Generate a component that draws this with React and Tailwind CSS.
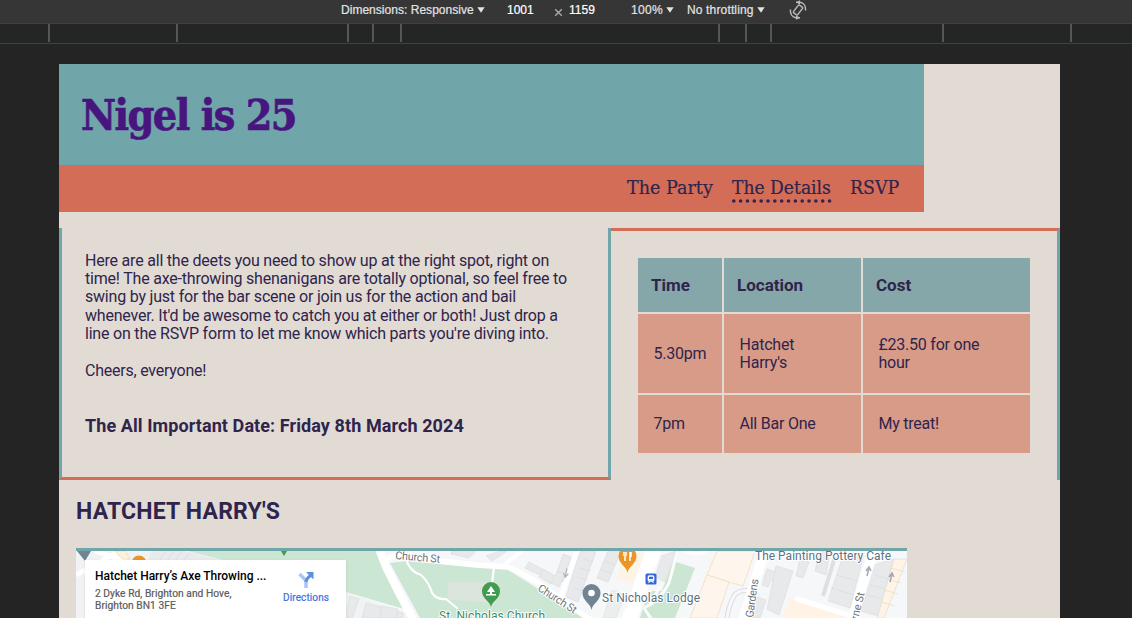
import React from "react";

function Caret() {
  return (
    <svg width="8" height="6" viewBox="0 0 8 6" className="shrink-0">
      <path d="M0.3 0.3h7.4L4 5.8z" fill="#e3e3e3" />
    </svg>
  );
}

function T({ w, className, children }) {
  return (
    <span className="block shrink-0 whitespace-nowrap" style={{ width: w }}>
      <span className={className}>{children}</span>
    </span>
  );
}

function Toolbar() {
  return (
    <div className="flex h-[23px] bg-[#363636] pl-[341px] font-['Liberation_Sans',Arial,sans-serif] text-[12px] leading-[21px] text-[#e3e3e3] [-webkit-text-stroke:0.2px]">
      <T w={136} className="tracking-[0.03px]">Dimensions: Responsive</T>
      <span className="mt-[7px] w-[30px] leading-none"><Caret /></span>
      <T w={47} className="text-white">1001</T>
      <svg width="9" height="9" viewBox="0 0 9 9" className="mr-[6px] mt-[8px] shrink-0"><path d="M1.2 1.2l6.6 6.6M7.8 1.2L1.2 7.8" stroke="#aaa" strokeWidth="1.4" /></svg>
      <T w={62} className="text-white">1159</T>
      <T w={35} className="tracking-[0.3px]">100%</T>
      <span className="mt-[7px] w-[21px] leading-none"><Caret /></span>
      <T w={70} className="tracking-[0.15px]">No throttling</T>
      <span className="mt-[7px] w-[31px] leading-none"><Caret /></span>
      <svg width="20" height="20" viewBox="0 0 20 20" fill="none" stroke="#b9b9b9" strokeWidth="1.5" className="shrink-0">
        <rect x="7.400" y="5.200" width="5.200" height="9.600" rx="1" transform="rotate(38 10 10)" />
        <path d="M8 2.300L12 2.300C15.500 2.800 18 6 17.600 10.500M12 17.800L8 17.800C4.500 17.200 2 14 2.400 9.500" />
        <path d="M12 .3v4.500L8 2.300zM8 19.800v-4.500l4 2.500z" fill="#b9b9b9" stroke="none" />
      </svg>
    </div>
  );
}

const ticks = [48, 176, 347, 372, 400, 718, 745, 770, 942, 1070];

function Map() {
  return (
    <svg width="831" height="67" viewBox="76 551 831 67" className="block">
      <rect x="76" y="551" width="831" height="67" fill="#f6f7f9" />
      <path d="M76 551H180L346 592 420 618H76z" fill="#f1f2f4" />
      <path d="M76 575L120 551M95 551L130 563" stroke="#fff" strokeWidth="5" />
      <path d="M115 551h10l5 8h-7z" fill="#fdf1df" stroke="#f2c68b" strokeWidth=".5" />
      <path d="M151 551h34l80 20h-120z" fill="#e9eaeb" />
      <path d="M158 562l8-11M166 562l8-11M174 562l8-11M182 562l8-9" stroke="#d9dadd" strokeWidth=".7" />
      <path d="M188 551H377L404 609 346 592z" fill="#cbe6d3" />
      <g fill="#e8e9eb" stroke="#d9dadd" strokeWidth=".6">
        <path d="M350 596l9 3-7 19h-7z" /><path d="M366 603l37 10v5H362z" /><path d="M382 606l16 3-2 9h-16z" />
        <path d="M452 551h24l-7 7-18-4z" /><path d="M486 556l14-5h7l-15 10z" />
        <path d="M529 562l17 9-4 5-17-8z" /><path d="M543 569l14 8-6 7-12-7z" />
        <path d="M556 575l7-21 8 3-8 25z" /><path d="M551 583l7-12 7 3-6 13z" />
        <path d="M580 551h16l-18 51-12-5z" /><path d="M583 559l10 3M580 568l10 3M577 577l10 3M573 588l10 3" fill="none" />
        <path d="M608 551h13l-13 31-11-4z" /><path d="M604 561l11 4M601 570l11 3" fill="none" />
        <path d="M662 556l14-5-11 31-10-5z" />
      </g>
      <path d="M390 563L407 561 479 568 507 569 582 617V618H420z" fill="#cbe6d3" />
      <path d="M448 582l40 0 4 21-44-4z" fill="#dce5dc" />
      <path d="M576 613h6v5h-8z" fill="#cbe6d3" />
      <g fill="none" stroke="#fff" strokeLinecap="round" strokeLinejoin="round">
        <path d="M379 549L386 567Q399 594 414 621" strokeWidth="8" />
        <path d="M386 560Q394 554 405 555L440 561 478 565 507 567Q523 572 548 590L592 621" strokeWidth="5.500" />
        <path d="M503 566L523 550" strokeWidth="4" />
        <path d="M578 549L559 602" strokeWidth="5" />
        <path d="M407 562Q411 572 421 575 429 582 432 593 437 600 446 599L457 608" strokeWidth="2.200" />
        <path d="M494 567L492 584" strokeWidth="2.200" />
        <path d="M654 549L629 620" strokeWidth="15" />
      </g>
      <path d="M566 569v8m-2.500-3l2.500 4 2.500-4" stroke="#aeb3c1" strokeWidth="1.200" fill="none" transform="rotate(10 570 573)" />
      <path d="M620 567l16-14h8l-12 31-15-7z" fill="#fef3e4" />
      <path d="M612 590l13 5-9 23h-13z" fill="#eceded" stroke="#dddddf" strokeWidth=".6" />
      <path d="M673 561L695 568 675 618H640Q644 602 652 591L662 591z" fill="#cbe6d3" />
      <path d="M678 549L669 583Q661 600 644 608M644 608L652 620M651 604L660 586" fill="none" stroke="#fafbfb" strokeWidth="3" />
      <path d="M680 549q18 9 29 0" fill="none" stroke="#fff" strokeWidth="3" />
      <path d="M717 551H755L743 586 729 582 707 575z" fill="#fef6ec" stroke="#f1ddbd" strokeWidth=".8" />
      <path d="M707 575L729 582 717 618H690z" fill="#fef6ec" stroke="#f1ddbd" strokeWidth=".8" />
      <path d="M751 591q-12-2-17 5-6 11-7 23" fill="none" stroke="#dadde2" strokeWidth="5" />
      <path d="M751 591q-12-2-17 5-6 11-7 23" fill="none" stroke="#f7f8fa" strokeWidth="3" />
      <path d="M765 549L743 620" stroke="#fff" strokeWidth="10" />
      <g fill="#e8e9eb" stroke="#d9dadd" strokeWidth=".6">
        <path d="M767 569l12 4-3 8-5-1-3 7-6-2z" /><path d="M776 566l17 5-14 44-12-6z" /><path d="M757 597l9 3-6 18h-9z" />
        <path d="M800 559l9 3-6 16-7-2z" /><path d="M820 551h10l-4 24-11-4z" />
        <path d="M842 559l22-5-14 54-22-7z" /><path d="M836 575l22 6M831 588l23 7" fill="none" />
        <path d="M874 565l20-6-16 57-17-5z" /><path d="M874 575l15 4M870 585l16 4M868 595l16 4" fill="none" />
        <path d="M894 559h13l-23 59h-7z" fill="#fef3e4" />
        <path d="M891 568l14 4M887 579l14 4M884 590l14 4M881 602l14 4" stroke="#f0d7af" fill="none" />
      </g>
      <path d="M835 557L823 596" stroke="#dcdfe4" strokeWidth="4" />
      <path d="M789 598l68 23h-75z" fill="#fef3e4" />
      <path d="M797 599L855 617" stroke="#fff" strokeWidth="5" strokeLinecap="round" />
      <path d="M874 549L852 621" stroke="#fff" strokeWidth="10" />
      <path d="M867 576l2-8m-3 3l3-4 2 4M890 582l2-8m-3 3l3-4 2 4" stroke="#a3a8b8" strokeWidth="1.500" fill="none" />
      <path d="M77 551h14l-6 10z" fill="#718493" />
      <circle cx="139" cy="563" r="7.500" fill="#eb9527" />
      <path d="M281 551h6l-3 5z" fill="#429c50" />
      <path d="M491 607c-1-6-9-8-9-16a9 9 0 0 1 18 0c0 8-8 10-9 16z" fill="#429c50" />
      <path d="M491 586l-4 6h3v2h-4v1.500h10V594h-4v-2h3z" fill="#fff" />
      <path d="M591.500 610c-1-7-9-9-9-17a9 9 0 0 1 18 0c0 8-8 10-9 17z" fill="#718493" />
      <circle cx="591.500" cy="593" r="3.300" fill="#fff" />
      <path d="M627.500 573c-1-7-9-9-9-17a9 9 0 0 1 18 0c0 8-8 10-9 17z" fill="#eb9527" />
      <path d="M624 552v4m2-4v4m-1 0v5m5-9v9m1-9v5" stroke="#fff" strokeWidth="1.500" />
      <rect x="645.500" y="573.500" width="11" height="11" rx="1.500" fill="#3466dc" />
      <rect x="648.300" y="576" width="5.400" height="5" rx="1" fill="none" stroke="#fff" strokeWidth="1.300" />
      <path d="M648.500 583l1.500-2m3.500 2l-1.500-2M648 579.500h6" stroke="#fff" />
      <g fontFamily="Roboto, sans-serif" fontWeight="400" stroke="#fff" strokeWidth="2" paintOrder="stroke" strokeLinejoin="round">
        <text x="395" y="559" fontSize="11" fill="#6b7480" textLength="45" transform="rotate(5 395 559)">Church St</text>
        <text x="537" y="590" fontSize="11" fill="#6b7480" textLength="44" transform="rotate(33 537 590)">Church St</text>
        <text x="439" y="620" fontSize="12" fill="#418b56" textLength="106">St. Nicholas Church</text>
        <text x="602" y="602" fontSize="12" fill="#5b7180" textLength="98">St Nicholas Lodge</text>
        <text x="755" y="560" fontSize="12" fill="#5b7180" textLength="136">The Painting Pottery Cafe</text>
        <text x="753" y="618" fontSize="11" fill="#6b7480" textLength="39" transform="rotate(-82 753 618)">Gardens</text>
        <text x="855" y="632" fontSize="11" fill="#6b7480" textLength="40" transform="rotate(-76 855 632)">borne St</text>
      </g>
    </svg>
  );
}

function MapCard() {
  return (
    <div className="absolute left-[9px] top-[9px] flex h-[90px] w-[261px] bg-white pl-[10px] pt-[8px] shadow-sm">
      <div className="w-[188px] whitespace-nowrap">
        <div className="text-[12px] font-medium leading-[16px] tracking-[-0.02px] text-black">Hatchet Harry’s Axe Throwing ...</div>
        <div className="mt-[4px] text-[10.200px] leading-[12px] tracking-[0.06px] text-[#5b5b5b] [-webkit-text-stroke:0.200px]">2 Dyke Rd, Brighton and Hove,<br />Brighton BN1 3FE</div>
      </div>
      <div className="flex flex-col items-center">
        <svg width="16" height="18" viewBox="0 0 16 18" className="mt-[3px]">
          <path d="M1.500 3L8 9.500V17" fill="none" stroke="#a9c5f4" strokeWidth="3.500" />
          <path d="M8 11q0-3 5-7" fill="none" stroke="#5b8fe0" strokeWidth="3" />
          <path d="M8 1h7.500v7.500z" fill="#5b8fe0" />
        </svg>
        <div className="mt-[3px] text-[10px] leading-[12px] tracking-[0.12px] text-[#3b6fe0] [-webkit-text-stroke:0.200px]">Directions</div>
      </div>
    </div>
  );
}

function Title() {
  return (
    <header className="flex h-[101px] w-[865px] bg-[#70a6a9] pl-[22px] pt-[23px]">
      <h1 className="origin-left scale-x-[0.990] whitespace-nowrap font-['Roboto_Slab','DejaVu_Serif',serif] text-[43px] font-bold leading-[57px] tracking-[-1.500px] text-[#48157f] [-webkit-text-stroke:0.700px_#48157f] [font-stretch:condensed]">Nigel is 25</h1>
    </header>
  );
}

function Nav() {
  const link = "block origin-left whitespace-nowrap [-webkit-text-stroke:0.200px]";
  return (
    <nav className="flex h-[47px] w-[865px] bg-[#d36d57] pl-[568px] pt-[11px] font-['Roboto_Slab','DejaVu_Serif',serif] text-[18px] leading-[23px] text-[#2f244c]">
      <div className="w-[105px]"><span className={`${link} scale-x-[0.975]`}>The Party</span></div>
      <div className="w-[117.500px]">
        <span className={`${link} scale-x-[0.953]`}>The Details</span>
        <svg width="100" height="4" viewBox="0 0 100 4" className="mt-[0.300px] block">
          <path d="M1.800 2h96.200" stroke="#2f244c" strokeWidth="3.600" strokeLinecap="round" strokeDasharray="0 6.840" />
        </svg>
      </div>
      <div><span className={`${link} scale-x-[0.965]`}>RSVP</span></div>
    </nav>
  );
}

function Schedule() {
  const th = "flex items-center bg-[#86a7a9] pl-[13px] text-[17px] font-bold";
  const td = "flex items-center bg-[#d89b88] pl-[15.500px] tracking-[-0.230px]";
  return (
    <div className="grid w-[392px] grid-cols-[84px_137px_167px] grid-rows-[54px_79px_58px] gap-[2px] text-[16px] leading-[18px]">
      <div className={th}>Time</div><div className={th}>Location</div><div className={th}>Cost</div>
      <div className={td}>5.30pm</div><div className={td}>Hatchet<br />Harry's</div><div className={td}>£23.50 for one<br />hour</div>
      <div className={td}>7pm</div><div className={td}>All Bar One</div><div className={td}>My treat!</div>
    </div>
  );
}

export default function App() {
  return (
    <div className="h-[618px] w-[1132px] overflow-hidden bg-[#242424]">
      <Toolbar />
      <div className="h-[21px] border-y border-[#3e403f] bg-[#242625]">
        <svg width="1132" height="18" className="block">
          {ticks.map((x) => <rect key={x} x={x} y="0" width="2" height="18" fill="#565656" />)}
        </svg>
      </div>
      <main className="ml-[59px] mt-[20px] h-[554px] w-[1001px] bg-[#e2dbd4] font-[Roboto,sans-serif] text-[#2f244c]">
        <Title />
        <Nav />
        <div className="mt-[16px] flex h-[252px]">
          <section className="w-[552px] whitespace-nowrap border-x-[3px] border-b-[3px] border-x-[#70a6a9] border-b-[#d36d57] pl-[23px] pt-[24px] text-[16px] leading-[18.200px]">
            <p className="tracking-[-0.205px]">Here are all the deets you need to show up at the right spot, right on<br />time! The axe-throwing shenanigans are totally optional, so feel free to<br />swing by just for the bar scene or join us for the action and bail<br />whenever. It'd be awesome to catch you at either or both! Just drop a<br />line on the RSVP form to let me know which parts you're diving into.</p>
            <p className="mt-[18.500px] tracking-[-0.230px]">Cheers, everyone!</p>
            <h3 className="mt-[35px] text-[18px] font-bold leading-[22px] tracking-[0.085px]">The All Important Date: Friday 8th March 2024</h3>
          </section>
          <section className="w-[449px] border-r-[3px] border-t-[3px] border-r-[#70a6a9] border-t-[#d36d57] pl-[27px] pt-[27px]">
            <Schedule />
          </section>
        </div>
        <h2 className="ml-[17px] mt-[18px] whitespace-nowrap text-[23px] font-bold leading-[28px] tracking-[0.200px]">HATCHET HARRY'S</h2>
        <div className="relative ml-[17px] mt-[22px] h-[70px] w-[831px] overflow-hidden border-t-[3px] border-[#70a6a9]">
          <Map />
          <MapCard />
        </div>
      </main>
    </div>
  );
}
